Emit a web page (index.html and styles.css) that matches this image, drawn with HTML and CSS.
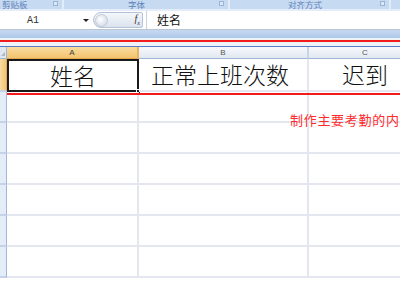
FILE: index.html
```html
<!DOCTYPE html>
<html lang="zh-CN">
<head>
<meta charset="utf-8">
<link rel="stylesheet" href="styles.css">
</head>
<body>
<div class="app">
  <div class="ribbon">
    <div class="group g1"><span class="glabel left">剪贴板</span><span class="launcher"></span></div>
    <div class="group g2"><span class="glabel">字体</span><span class="launcher"></span></div>
    <div class="group g3"><span class="glabel">对齐方式</span><span class="launcher"></span></div>
    <div class="group g4"></div>
  </div>
  <div class="formula-bar">
    <div class="namebox"><span class="name">A1</span><span class="arrow"></span></div>
    <div class="pill"><span class="knob"></span><span class="fx">f<sub>x</sub></span></div>
    <div class="formula">姓名</div>
  </div>
  <div class="band"></div>
  <div class="gap"></div>
  <div class="sheet">
    <div class="row head">
      <div class="rh corner"><span class="tri"></span></div>
      <div class="ch col-a sel">A</div>
      <div class="ch col-b">B</div>
      <div class="ch col-c">C</div>
    </div>
    <div class="row r1">
      <div class="rh selrow"></div>
      <div class="cell col-a active">姓名<span class="handle"></span></div>
      <div class="cell col-b">正常上班次数</div>
      <div class="cell col-c">迟到</div>
    </div>
    <div class="row"><div class="rh"></div><div class="cell col-a"></div><div class="cell col-b"></div><div class="cell col-c"></div></div>
    <div class="row"><div class="rh"></div><div class="cell col-a"></div><div class="cell col-b"></div><div class="cell col-c"></div></div>
    <div class="row"><div class="rh"></div><div class="cell col-a"></div><div class="cell col-b"></div><div class="cell col-c"></div></div>
    <div class="row"><div class="rh"></div><div class="cell col-a"></div><div class="cell col-b"></div><div class="cell col-c"></div></div>
    <div class="row"><div class="rh"></div><div class="cell col-a"></div><div class="cell col-b"></div><div class="cell col-c"></div></div>
    <div class="row"><div class="rh"></div><div class="cell col-a"></div><div class="cell col-b"></div><div class="cell col-c"></div></div>
  </div>
  <div class="mark line-top"></div>
  <div class="mark line-bottom"></div>
  <div class="note">制作主要考勤的内容</div>
</div>
</body>
</html>
```
FILE: styles.css
```css
* { box-sizing: border-box; }
html, body { margin: 0; padding: 0; }
body {
  width: 400px;
  height: 300px;
  overflow: hidden;
  background: #fff;
  font-family: "Noto Sans CJK SC", "Liberation Sans", sans-serif;
}
.app { position: relative; width: 400px; height: 300px; overflow: hidden; }

.ribbon {
  display: flex;
  height: 11px;
  background: #c6daf2;
  border-bottom: 2px solid #e3ecf8;
}
.group {
  display: flex;
  align-items: flex-start;
  height: 9px;
  border-right: 2px solid #e2ebf7;
  position: relative;
}
.g1 { width: 64px; }
.g2 { width: 166px; }
.g3 { width: 161px; }
.g4 { flex: 1; border-right: 0; }
.glabel {
  flex: 1;
  text-align: center;
  font-size: 8.5px;
  line-height: 9px;
  color: #5f82b9;
  white-space: nowrap;
}
.glabel.left { text-align: left; padding-left: 2px; }
.g2 .glabel { padding-right: 10px; }
.launcher {
  width: 5px;
  height: 5px;
  margin: 1px 4px 0 0;
  border: 1px solid #9ab3d6;
  background: #dde8f6;
}

.formula-bar {
  display: flex;
  align-items: center;
  height: 19px;
  background: #fff;
  border-bottom: 1px solid #b9c4d4;
}
.namebox {
  width: 93px;
  display: flex;
  align-items: center;
  height: 100%;
}
.name {
  font-family: "Liberation Mono", monospace;
  font-size: 10px;
  color: #333;
  margin-left: 27px;
  flex: 1;
}
.arrow {
  width: 0; height: 0;
  border-left: 3px solid transparent;
  border-right: 3px solid transparent;
  border-top: 3px solid #222;
  margin-right: 4px;
}
.pill {
  width: 50px;
  height: 16px;
  display: flex;
  align-items: center;
  justify-content: space-between;
  border: 1px solid #b4c3d8;
  border-radius: 8px 2px 2px 8px;
  background: linear-gradient(#f4f7fb, #dbe3ee);
  padding: 0 2px 0 1px;
}
.knob {
  width: 13px; height: 13px;
  border-radius: 50%;
  background: radial-gradient(circle at 40% 40%, #fff, #c9d3e0);
  border: 1px solid #c0cad8;
}
.fx {
  font-family: "Liberation Serif", serif;
  font-style: italic;
  font-size: 10px;
  color: #333;
  line-height: 1;
}
.fx sub { font-size: 6px; }
.formula {
  flex: 1;
  height: 100%;
  border-left: 1px solid #c9d3e0;
  margin-left: 3px;
  padding-left: 10px;
  font-size: 12px;
  line-height: 18px;
  color: #111;
}

.band {
  height: 8px;
  background: linear-gradient(#c6d9f1, #afc8ea);
}
.gap {
  height: 9px;
  background: #eef3fa;
  border-bottom: 1px solid #5a7cc4;
}

.sheet { display: flex; flex-direction: column; }
.row { display: flex; height: 31px; }
.row.head { height: 12px; }
.row.r1 { height: 33px; }
.rh {
  width: 7px;
  flex: none;
  background: #e4ecf7;
  border-right: 1px solid #9fb6d8;
  border-bottom: 2px solid #c5d3e8;
}
.rh.corner {
  background: #dfe6f0;
  position: relative;
  border-bottom: 1px solid #9fb6d8;
}
.tri {
  position: absolute;
  right: 1px; bottom: 2px;
  width: 0; height: 0;
  border-left: 4px solid transparent;
  border-bottom: 4px solid #a9b7c9;
}
.rh.selrow {
  background: linear-gradient(90deg, #f8dba3, #f3c676);
  border-right-color: #e1a84c;
}
.ch {
  font-family: "Liberation Sans", sans-serif;
  font-size: 8px;
  line-height: 11px;
  text-align: center;
  color: #555;
  background: linear-gradient(#f6f8fb, #e2e8f1);
  border-right: 2px solid #cad4e2;
  border-bottom: 1px solid #9fb6d8;
}
.ch.sel {
  background: linear-gradient(#f9dc9f, #f2c46f);
  border-right-color: #e7b560;
  border-bottom-color: #e1a84c;
  color: #3a3a3a;
}
.col-a { width: 132px; flex: none; }
.col-b { width: 170px; flex: none; }
.col-c { width: 114px; flex: none; }
.cell {
  border-right: 2px solid #e4e7ef;
  border-bottom: 2px solid #e4e7ef;
  font-size: 23px;
  font-weight: 300;
  text-align: center;
  line-height: 31px;
  color: #111;
  white-space: nowrap;
  position: relative;
}
.cell.col-b { padding-right: 6px; }
.cell.active {
  border: 2px solid #1a1a1a;
  line-height: 29px;
}
.handle {
  position: absolute;
  right: -4px; bottom: -4px;
  width: 5px; height: 5px;
  background: #1a1a1a;
  border: 1px solid #fff;
}

.mark {
  position: absolute;
  left: 0;
  height: 2px;
  background: #f21c1c;
}
.line-top { top: 40px; width: 400px; }
.line-bottom { top: 93px; left: 7px; width: 393px; }
.note {
  position: absolute;
  left: 290px;
  top: 112px;
  font-size: 13px;
  line-height: 16px;
  letter-spacing: 0.7px;
  color: #ff2b2b;
  white-space: nowrap;
}
```
